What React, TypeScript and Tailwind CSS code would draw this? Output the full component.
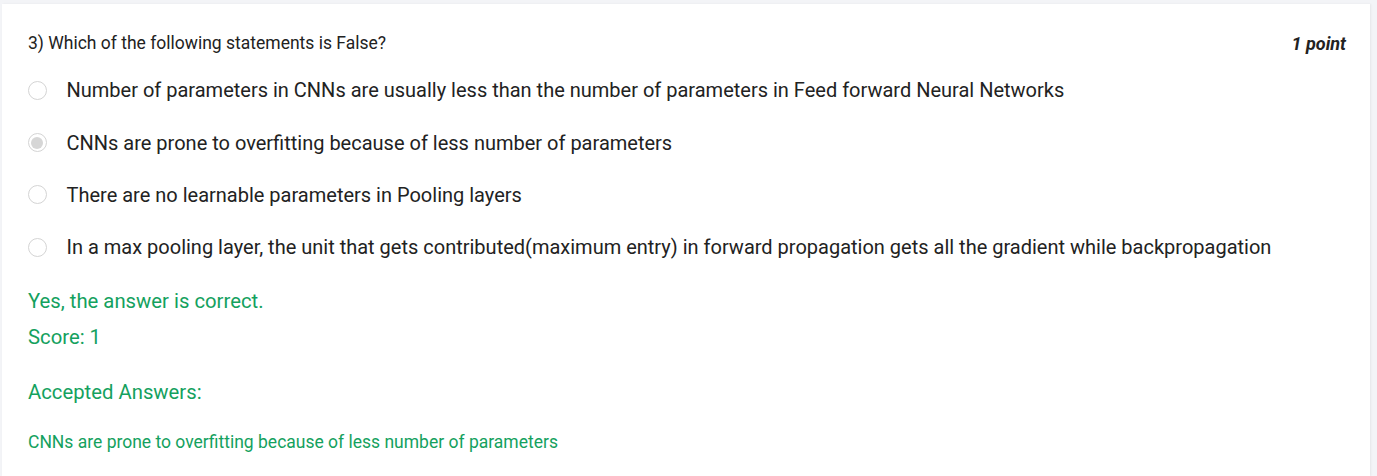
export default function App() {
  const options = [
    { text: 'Number of parameters in CNNs are usually less than the number of parameters in Feed forward Neural Networks', checked: false },
    { text: 'CNNs are prone to overfitting because of less number of parameters', checked: true },
    { text: 'There are no learnable parameters in Pooling layers', checked: false },
    { text: 'In a max pooling layer, the unit that gets contributed(maximum entry) in forward propagation gets all the gradient while backpropagation', checked: false },
  ];

  return (
    <div className="min-h-[476px] bg-[#f3f4f7] pt-[4px] pl-[2px] pr-[7px] font-['Roboto',sans-serif]">
      <div className="bg-white min-h-[472px] pl-[26px] pr-[24px] pt-[28px] shadow-[1px_0_2px_rgba(0,0,0,0.06)]">
        <div className="flex items-center justify-between h-[22px]">
          <span className="text-[17.5px] text-[#222]">3) Which of the following statements is False?</span>
          <span className="text-[18px] font-bold italic text-[#222]">1 point</span>
        </div>

        <div className="mt-[10px] flex flex-col">
          {options.map((o) => (
            <label key={o.text} className="flex items-center h-[52.4px]">
              <span className="w-[19px] h-[19px] rounded-full border border-[#d4d4d4] bg-white flex items-center justify-center ml-[-0.5px]">
                {o.checked && <span className="w-[12px] h-[12px] rounded-full bg-[#d6d6d6]" />}
              </span>
              <span className="ml-[20px] text-[20px] text-[#222]">{o.text}</span>
            </label>
          ))}
        </div>

        <div className="mt-[14px] text-[#14a15e]">
          <p className="text-[20.3px] leading-[26px]">Yes, the answer is correct.</p>
          <p className="text-[20.3px] leading-[26px] mt-[10px]">Score: 1</p>
          <p className="text-[20.3px] leading-[26px] mt-[29px]">Accepted Answers:</p>
          <p className="text-[17.5px] leading-[22px] mt-[26px]">CNNs are prone to overfitting because of less number of parameters</p>
        </div>
      </div>
    </div>
  );
}
